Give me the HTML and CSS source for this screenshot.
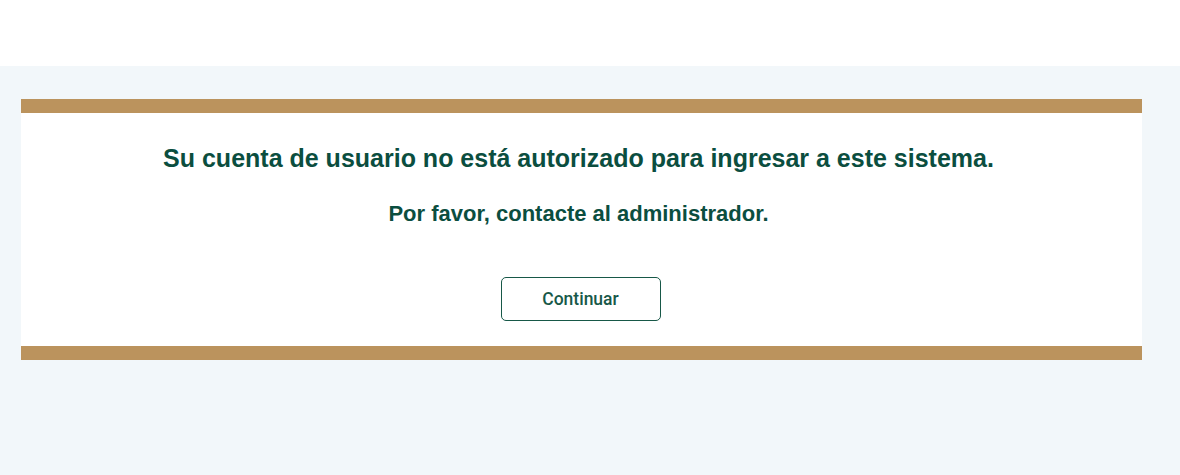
FILE: index.html
```html
<!DOCTYPE html>
<html lang="es">
<head>
  <meta charset="UTF-8">
  <meta name="viewport" content="width=device-width, initial-scale=1.0">
  <title>Acceso no autorizado</title>
  <link rel="stylesheet" href="styles.css">
</head>
<body>
  <header class="topbar"></header>

  <main class="page">
    <div class="card">
      <h1>Su cuenta de usuario no está autorizado para ingresar a este sistema.</h1>
      <h2>Por favor, contacte al administrador.</h2>
      <button class="btn-outline">Continuar</button>
    </div>
  </main>
</body>
</html>
```

FILE: styles.css
```css
body {
  margin: 0;
  padding: 0;
  font-family: "Liberation Sans", Arial, sans-serif;
  background-color: #f2f7fa;
  height: 475px;
  overflow: hidden;
}
.topbar {
  height: 66px;
  background-color: #fff;
}
.page {
  padding: 33px 38px 0 21px;
}
.card {
  background-color: #fff;
  border-top: 14px solid #bb935d;
  border-bottom: 14px solid #bb935d;
  text-align: center;
  padding: 30px 0 25px;
}
h1 {
  margin: 0;
  font-size: 25px;
  line-height: 30px;
  color: #0b4e3f;
  padding-right: 6px;
}
h2 {
  margin: 28px 0 0;
  font-size: 22px;
  line-height: 26px;
  color: #0b4e3f;
  padding-right: 6px;
}
.btn-outline {
  margin: 50px 2px 0 0;
  width: 160px;
  height: 44px;
  font-family: Roboto, "Noto Sans", sans-serif;
  font-size: 17.5px;
  font-weight: 500;
  color: #175848;
  background-color: #fff;
  border: 1px solid #175848;
  border-radius: 5px;
  cursor: pointer;
}
```
